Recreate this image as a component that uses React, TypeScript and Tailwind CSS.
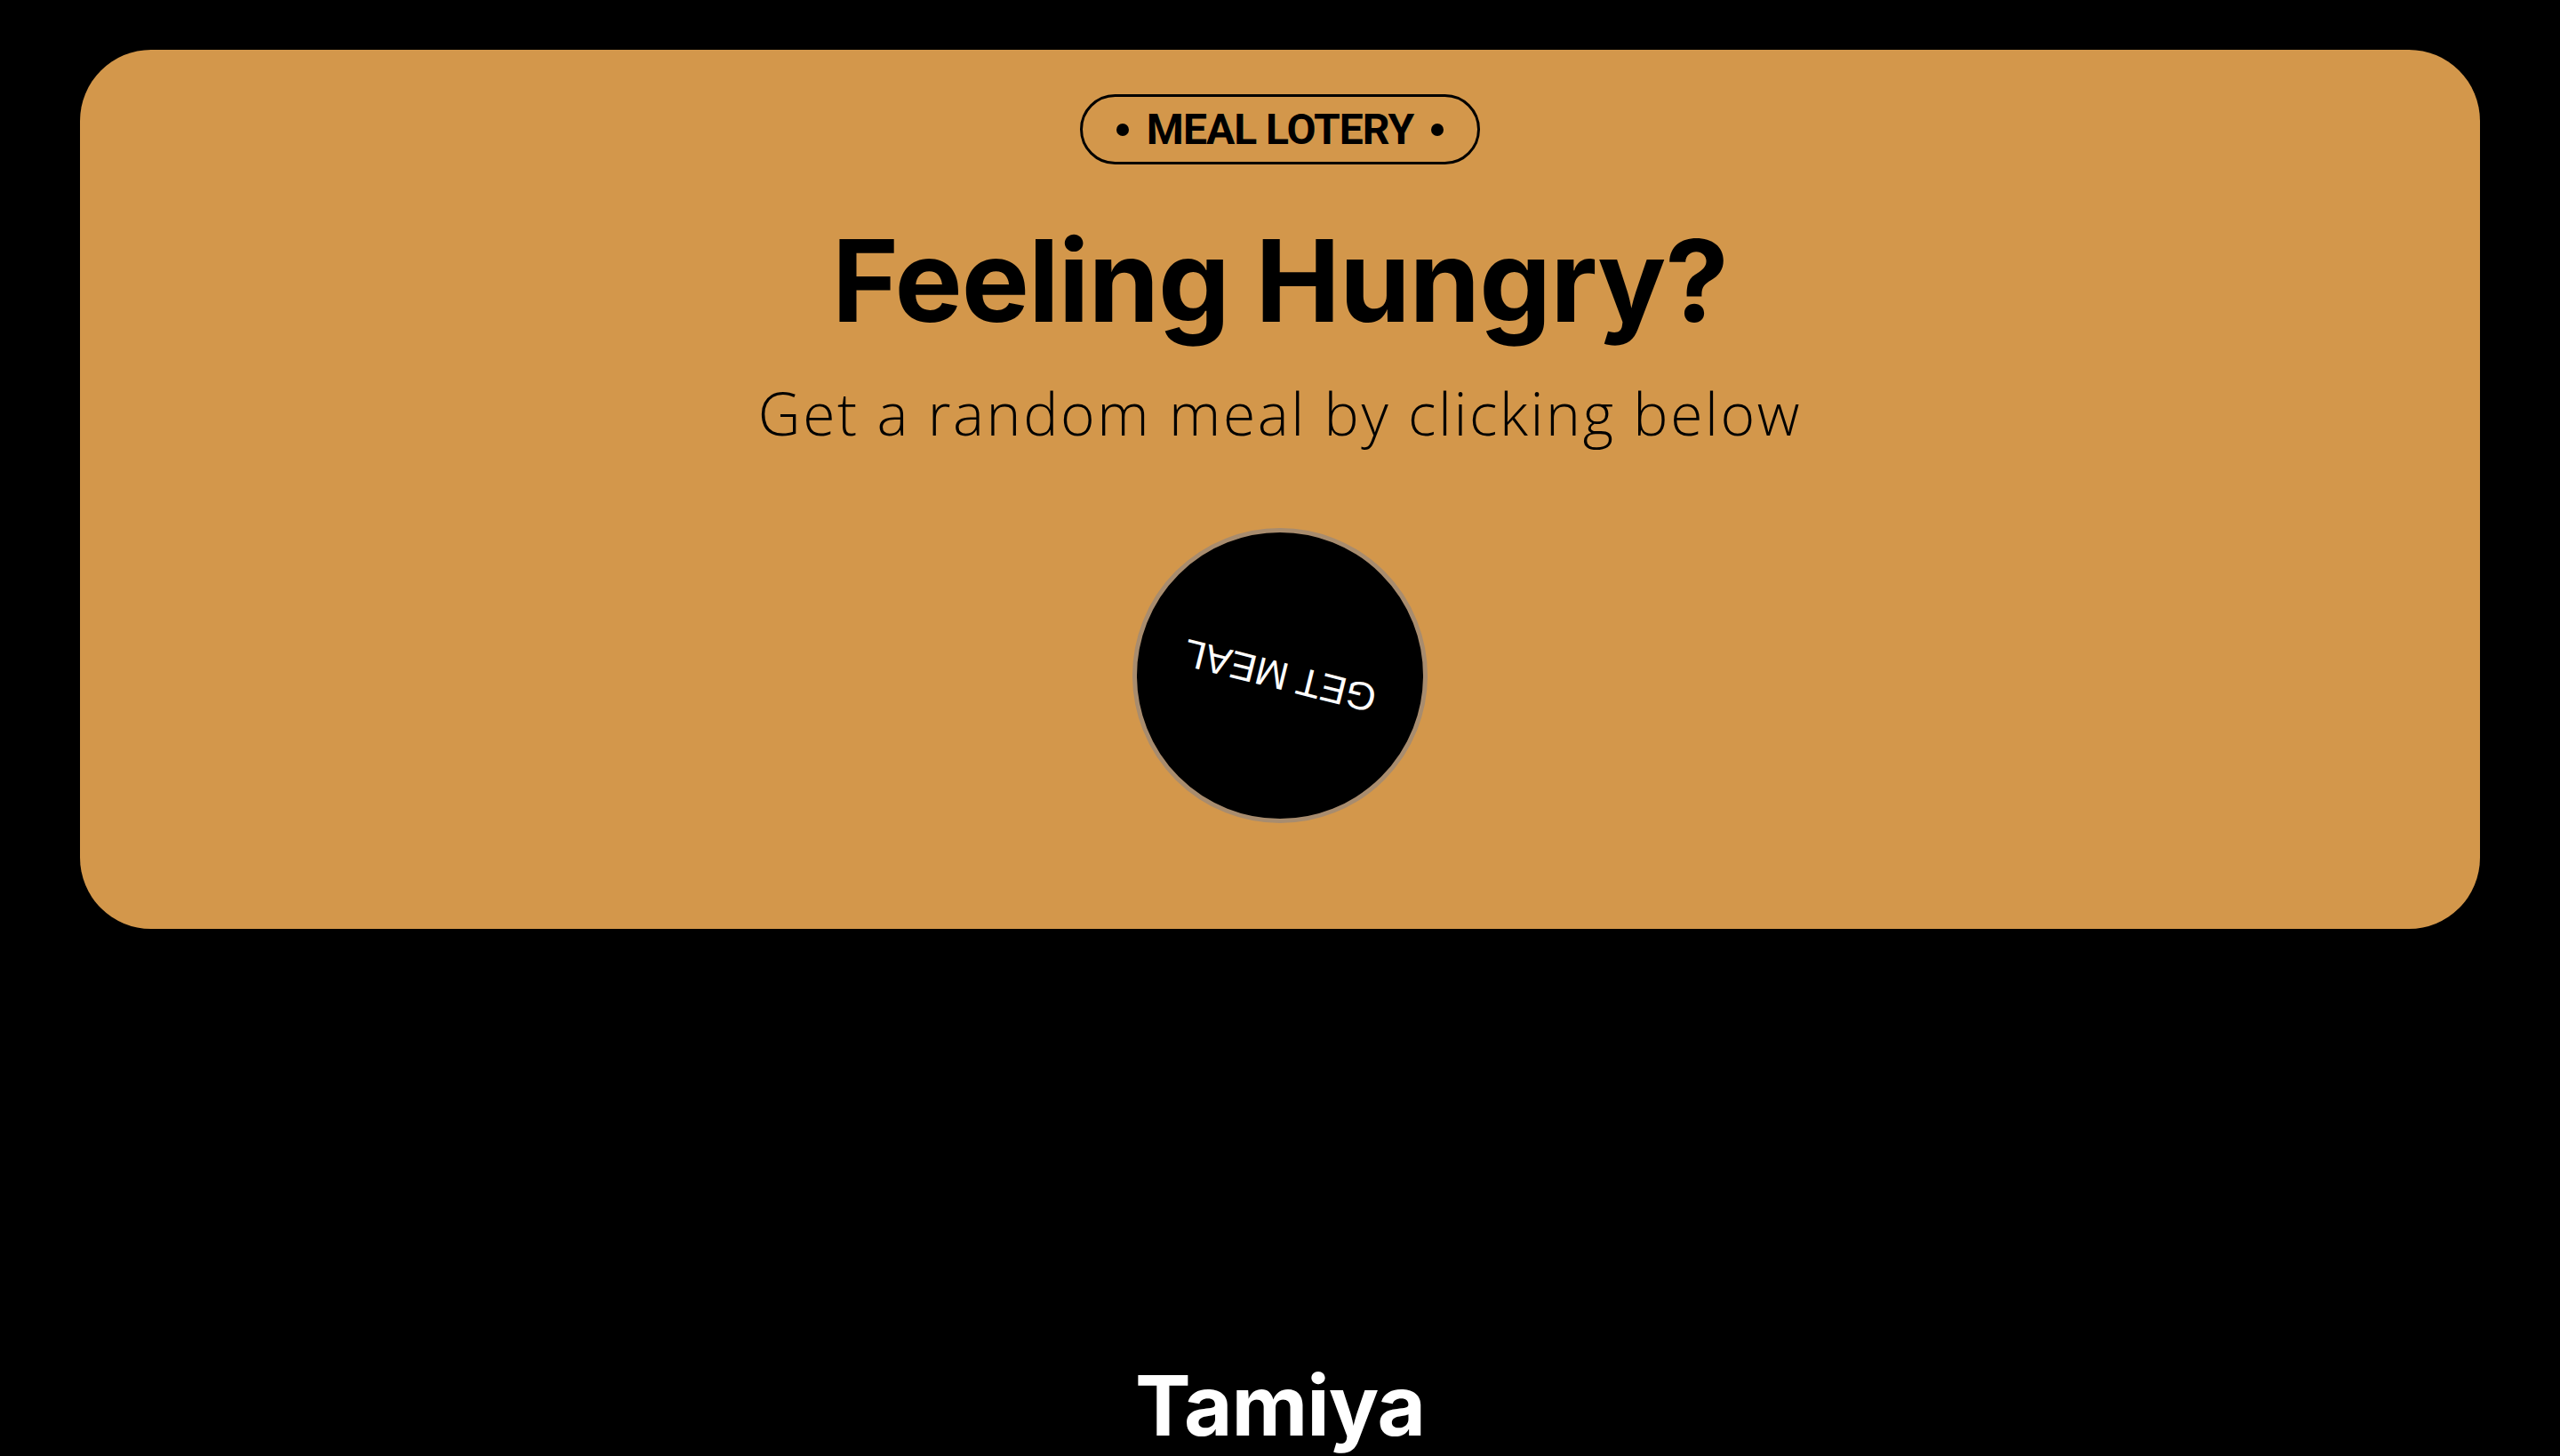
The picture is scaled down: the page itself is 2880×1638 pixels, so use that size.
import React from "react";

export default function App() {
  return (
    <div className="min-h-screen w-full bg-black px-[90px] pt-[56px]">
      <section className="flex flex-col items-center rounded-[80px] bg-[#d3974b] pt-[50px] pb-[119px]">
        <div
          className="flex h-[79px] items-center gap-[20px] rounded-full border-[3px] border-black px-[38px] text-black"
          style={{ fontFamily: "Roboto, 'Liberation Sans', sans-serif" }}
        >
          <span className="h-[14px] w-[14px] rounded-full bg-black" />
          <span className="text-[48px] font-bold leading-none tracking-[-1px]">MEAL LOTERY</span>
          <span className="h-[14px] w-[14px] rounded-full bg-black" />
        </div>
        <h1
          className="mt-[67px] text-[128px] font-bold leading-none tracking-[-1px] text-black"
          style={{ fontFamily: "Inter, 'Liberation Sans', sans-serif" }}
        >
          Feeling Hungry?
        </h1>
        <p
          className="mt-[51px] text-[66px] font-light leading-none tracking-[2.6px] text-black"
          style={{ fontFamily: "'Open Sans', Lato, sans-serif" }}
        >
          Get a random meal by clicking below
        </p>
        <button className="mt-[97px] flex h-[332px] w-[332px] items-center justify-center rounded-full border-[5px] border-[#a88c6e] bg-black">
          <span
            className="rotate-[194deg] text-[44px] leading-none text-white"
            style={{ fontFamily: "'Liberation Sans', Arial, sans-serif" }}
          >
            GET MEAL
          </span>
        </button>
      </section>
      <h2
        className="mt-[489px] text-center text-[94px] font-bold leading-none tracking-[-1px] text-white"
        style={{ fontFamily: "Inter, 'Liberation Sans', sans-serif" }}
      >
        Tamiya
      </h2>
    </div>
  );
}
